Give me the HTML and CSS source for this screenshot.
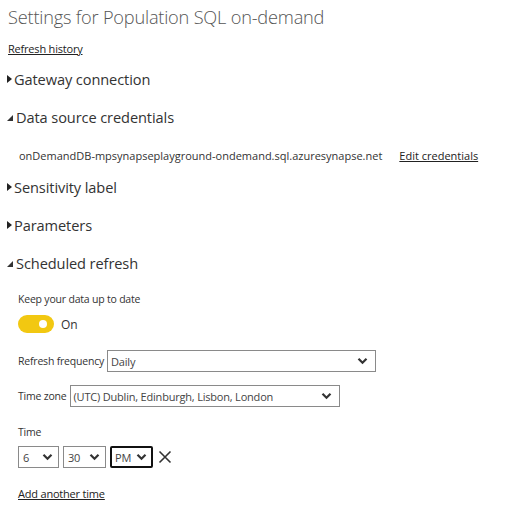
FILE: index.html
```html
<!DOCTYPE html>
<html>
<head>
<meta charset="utf-8">
<link rel="stylesheet" href="styles.css">
</head>
<body>
<div class="page">
  <h1 class="title">Settings for Population SQL on-demand</h1>
  <a class="link history">Refresh history</a>

  <div class="section first">
    <span class="tri right"></span><span class="sec-title">Gateway connection</span>
  </div>

  <div class="section">
    <span class="tri down"></span><span class="sec-title">Data source credentials</span>
  </div>
  <div class="cred-row">
    <span class="cred-name">onDemandDB-mpsynapseplayground-ondemand.sql.azuresynapse.net</span>
    <a class="link edit">Edit credentials</a>
  </div>

  <div class="section">
    <span class="tri right"></span><span class="sec-title">Sensitivity label</span>
  </div>

  <div class="section">
    <span class="tri right"></span><span class="sec-title">Parameters</span>
  </div>

  <div class="section">
    <span class="tri down"></span><span class="sec-title">Scheduled refresh</span>
  </div>

  <div class="sched">
    <div class="label keep">Keep your data up to date</div>
    <div class="toggle-row">
      <span class="toggle"><span class="knob"></span></span>
      <span class="on">On</span>
    </div>

    <div class="field-row freq">
      <span class="label">Refresh frequency</span>
      <div class="select sel-freq">
        <span>Daily</span>
        <svg class="chev" width="11" height="8" viewBox="0 0 11 8"><path d="M1.5 1.8 L5.5 5.8 L9.5 1.8" fill="none" stroke="#333" stroke-width="2.2"/></svg>
      </div>
    </div>

    <div class="field-row tz">
      <span class="label">Time zone</span>
      <div class="select sel-tz">
        <span>(UTC) Dublin, Edinburgh, Lisbon, London</span>
        <svg class="chev" width="11" height="8" viewBox="0 0 11 8"><path d="M1.5 1.8 L5.5 5.8 L9.5 1.8" fill="none" stroke="#333" stroke-width="2.2"/></svg>
      </div>
    </div>

    <div class="label time-label">Time</div>
    <div class="time-row">
      <div class="select small sel-h">
        <span>6</span>
        <svg class="chev" width="11" height="8" viewBox="0 0 11 8"><path d="M1.5 1.8 L5.5 5.8 L9.5 1.8" fill="none" stroke="#333" stroke-width="2.2"/></svg>
      </div>
      <div class="select small sel-m">
        <span>30</span>
        <svg class="chev" width="11" height="8" viewBox="0 0 11 8"><path d="M1.5 1.8 L5.5 5.8 L9.5 1.8" fill="none" stroke="#333" stroke-width="2.2"/></svg>
      </div>
      <div class="select small sel-ampm focused">
        <span>PM</span>
        <svg class="chev" width="11" height="8" viewBox="0 0 11 8"><path d="M1.5 1.8 L5.5 5.8 L9.5 1.8" fill="none" stroke="#333" stroke-width="2.2"/></svg>
      </div>
      <svg class="close" width="14" height="14" viewBox="0 0 14 14"><path d="M1.5 1.5 L12.5 12.5 M12.5 1.5 L1.5 12.5" stroke="#333" stroke-width="1.6"/></svg>
    </div>

    <a class="link add">Add another time</a>
  </div>
</div>
</body>
</html>
```

FILE: styles.css
```css
html, body {
  margin: 0;
  padding: 0;
  background: #fff;
}
body {
  font-family: "Open Sans", "Noto Sans", sans-serif;
  color: #333;
}
.page {
  padding: 4px 0 0 8px;
}
.title {
  margin: 0;
  font-size: 18.2px;
  font-weight: 300;
  color: #555;
  line-height: 26px;
  letter-spacing: -0.2px;
}
.link {
  color: #222;
  text-decoration: underline;
  font-size: 11px;
  letter-spacing: -0.2px;
  cursor: pointer;
}
.history {
  display: block;
  margin-top: 11px;
  line-height: 16px;
}
.section {
  display: flex;
  align-items: center;
  height: 38px;
  margin-left: -1px;
}
.section.first {
  margin-top: 3px;
}
.sec-title {
  font-size: 14.6px;
  color: #333;
  letter-spacing: -0.1px;
}
.tri {
  display: inline-block;
  width: 0;
  height: 0;
  margin-right: 2px;
}
.tri.right {
  border-top: 4px solid transparent;
  border-bottom: 4px solid transparent;
  border-left: 5px solid #222;
}
.tri.down {
  border-left: 6px solid transparent;
  border-bottom: 6px solid #333;
  margin-right: 3px;
  margin-top: 2px;
}
.cred-row {
  display: flex;
  align-items: flex-start;
  box-sizing: border-box;
  height: 32px;
  padding: 13px 0 0 11px;
  line-height: 14px;
  font-size: 11px;
}
.cred-name {
  color: #333;
  letter-spacing: 0;
  margin-right: 17px;
}
.edit {
  letter-spacing: 0;
}
.sched {
  padding-left: 10px;
  padding-top: 10px;
}
.label {
  font-size: 10.5px;
  color: #333;
  letter-spacing: -0.2px;
}
.keep {
  line-height: 14px;
}
.toggle-row {
  display: flex;
  align-items: center;
  margin-top: 9px;
  height: 18px;
}
.toggle {
  position: relative;
  width: 36px;
  height: 18px;
  border-radius: 9px;
  background: #f2c811;
  display: inline-block;
}
.knob {
  position: absolute;
  right: 7px;
  top: 5px;
  width: 8px;
  height: 8px;
  border-radius: 50%;
  background: #fff;
}
.on {
  font-size: 12px;
  margin-left: 7px;
  color: #333;
}
.field-row {
  display: flex;
  align-items: center;
  gap: 3px;
}
.freq {
  margin-top: 17px;
}
.tz {
  margin-top: 13px;
  gap: 3px;
}
.select {
  display: flex;
  align-items: center;
  justify-content: space-between;
  box-sizing: border-box;
  height: 22px;
  border: 1px solid #8a8a8a;
  background: #fff;
  padding: 0 7px 0 3px;
  font-size: 11px;
  color: #444;
  letter-spacing: -0.2px;
}
.sel-freq {
  width: 269px;
}
.sel-tz {
  width: 270px;
}
.time-label {
  margin-top: 18px;
  line-height: 14px;
}
.time-row {
  display: flex;
  align-items: center;
  gap: 4px;
  margin-top: 7px;
}
.select.small {
  padding: 0 5px 0 4px;
}
.sel-h {
  width: 41px;
}
.sel-m {
  width: 43px;
}
.sel-ampm {
  width: 43px;
}
.select.focused {
  border: 2px solid #111;
  border-radius: 2px;
  padding: 0 4px 0 3px;
}
.close {
  margin-left: 1px;
}
.add {
  display: block;
  margin-top: 18px;
}
```
